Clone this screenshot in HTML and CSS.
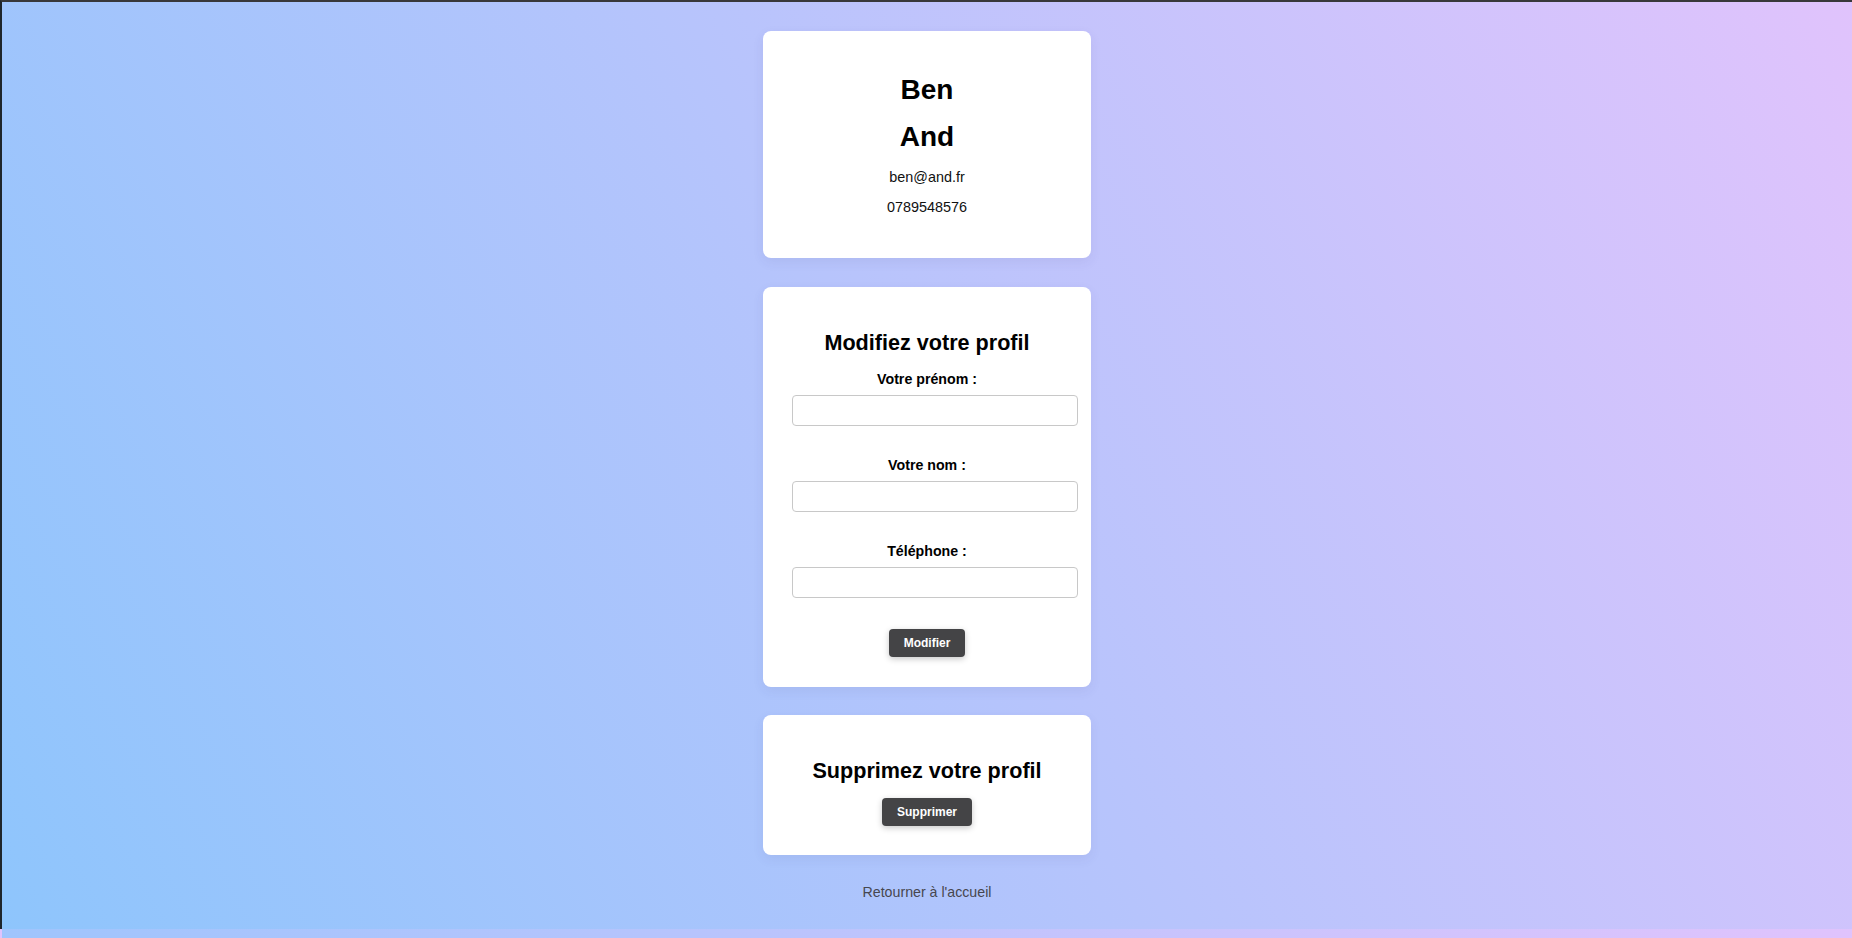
FILE: index.html
```html
<!DOCTYPE html>
<html lang="fr">
<head>
<meta charset="utf-8">
<title>Profil</title>
<link rel="stylesheet" href="styles.css">
</head>
<body>
<main class="page">
  <section class="card card-info">
    <h1 class="name">Ben</h1>
    <h1 class="name">And</h1>
    <p class="info">ben@and.fr</p>
    <p class="info">0789548576</p>
  </section>

  <section class="card">
    <h2 class="card-title">Modifiez votre profil</h2>
    <form class="form">
      <div class="field">
        <label class="field-label" for="prenom">Votre prénom :</label>
        <input class="field-input" id="prenom" type="text">
      </div>
      <div class="field">
        <label class="field-label" for="nom">Votre nom :</label>
        <input class="field-input" id="nom" type="text">
      </div>
      <div class="field">
        <label class="field-label" for="tel">Téléphone :</label>
        <input class="field-input" id="tel" type="text">
      </div>
      <button class="btn" type="button">Modifier</button>
    </form>
  </section>

  <section class="card card-delete">
    <h2 class="card-title">Supprimez votre profil</h2>
    <button class="btn" type="button">Supprimer</button>
  </section>

  <a class="back-link" href="#">Retourner à l'accueil</a>
</main>
</body>
</html>
```

FILE: styles.css
```css
html {
  border-top: 2px solid #38383a;
  border-left: 2px solid #1f262b;
}

body {
  margin: 0;
  font-family: "Liberation Sans", Arial, sans-serif;
  color: #000;
  background: linear-gradient(62deg, #8ec5fc 0%, #e0c3fc 100%);
}

.page {
  display: flex;
  flex-direction: column;
  align-items: center;
  gap: 28.8px;
  padding: 28.8px 0;
}

.card {
  width: 270.4px;
  padding: 28.8px;
  background: #fff;
  border-radius: 8px;
  box-shadow: 0 4px 12px rgba(60, 60, 120, 0.08);
  text-align: center;
  display: flex;
  flex-direction: column;
  align-items: center;
}

.card > * {
  flex: none;
}

.card-info {
  display: block;
}

.name {
  font-size: 28px;
  font-weight: bold;
  line-height: 32.2px;
  margin: 14.5px 0;
}

.info {
  font-size: 14.4px;
  line-height: 16.5px;
  margin: 14.4px 0;
  color: #111;
}

.name + .info {
  margin-top: 15.6px;
}

.info:last-child {
  margin-bottom: 13.2px;
}

.card-title {
  font-size: 21.6px;
  line-height: 24.8px;
  font-weight: bold;
  margin: 15.4px 0 15.6px;
}

.card-delete .card-title {
  margin: 14.4px 0 15px;
}

.form {
  width: 100%;
  display: flex;
  flex-direction: column;
  align-items: center;
  margin-bottom: 1.2px;
}

.field {
  width: 100%;
  margin-bottom: 30.9px;
  text-align: center;
}

.field-label {
  display: block;
  font-size: 14.2px;
  line-height: 16.3px;
  font-weight: bold;
  margin-bottom: 7.6px;
}

.field-input {
  display: block;
  width: 100%;
  height: 16.2px;
  padding: 6.4px 6.9px;
  margin: 0;
  border: 1px solid #c8c8c8;
  border-radius: 4px;
  font-family: "Liberation Sans", Arial, sans-serif;
  font-size: 14px;
  background: #fff;
  text-align: left;
}

.btn {
  display: block;
  font-family: "Liberation Sans", Arial, sans-serif;
  font-size: 12px;
  line-height: 14px;
  font-weight: bold;
  color: #fff;
  background: #444446;
  border: none;
  border-radius: 4px;
  padding: 7px 14.6px;
  box-shadow: 0 2px 6px rgba(0, 0, 0, 0.22);
  cursor: pointer;
}

.back-link {
  font-size: 14.2px;
  line-height: 16px;
  color: #47474f;
  text-decoration: none;
}
```
